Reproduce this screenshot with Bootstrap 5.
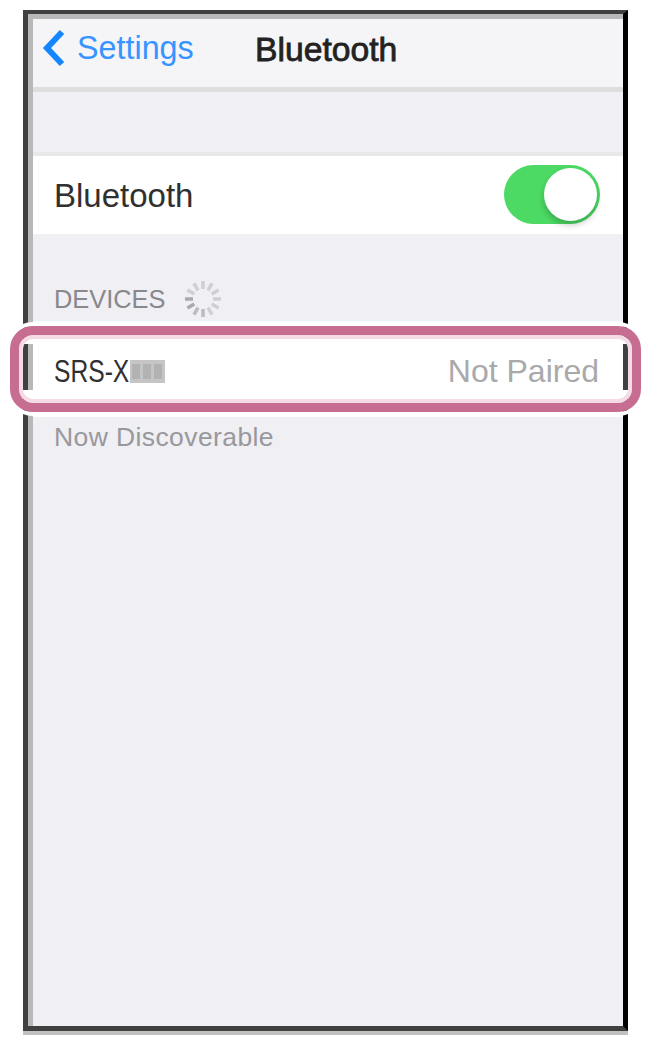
<!DOCTYPE html>
<html lang="en">
<head>
<meta charset="utf-8">
<meta name="viewport" content="width=device-width, initial-scale=1">
<title>Bluetooth</title>
<link href="https://cdn.jsdelivr.net/npm/bootstrap@5.3.0/dist/css/bootstrap.min.css" rel="stylesheet">
<style>
body{background:#fff;font-family:"Liberation Sans",Arial,sans-serif;line-height:1;overflow:hidden}
.phone-shade{width:605px;margin-left:23px;padding-top:10px;border-bottom:4px solid #c1c1c1}
.phone{height:1021px;border:5px solid #404040;border-top-width:4px;border-right-color:#000;background:#efeff4}
.screen{height:1012px;border-left:5px solid #b8b8b8;border-top:5px solid #b8b8b8}
.topbar{height:73px;background:#f5f5f7;border-bottom:5px solid #dededf;padding:0 0 9px 9px}
.back{color:#3894ff;font-size:32.3px;width:213px;gap:11px}
.title{font-size:33.7px;color:#222;-webkit-text-stroke:.8px #222;padding-top:2px}
.switch-row{height:82px;margin-top:60px;border-top:4px solid #e8e8eb;background:#fff;padding:0 23px 2px 21px}
.row-name{font-size:33px;color:#303030;padding-top:3px}
.toggle{width:96px;height:59px;border-radius:30px;background:#4cd964;padding:3px 3px 0 0}
.knob{width:53px;height:53px;border-radius:50%;background:#fff;box-shadow:0 4px 6px #00000038}
.section-head{height:87px;padding:53px 0 0 21px;gap:19px;color:#88888d;font-size:25.4px}
.device{position:relative;height:96px;background:#fff;padding:4px 24px 0 21px}
.device-name{width:76px;font-size:32px;color:#303030;white-space:nowrap}
.device-name span{display:inline-block;transform:scaleX(.77);transform-origin:left}
.status{font-size:32px;color:#a9a9ac}
.ring{position:absolute;left:-23px;top:5px;width:631px;height:86px;border:9px solid #c76d92;border-radius:23px;box-shadow:0 0 0 4px #fff,inset 0 0 0 4px #f4dbe5;background:linear-gradient(#fff 9px,transparent 9px,transparent 55px,#fff 55px) padding-box,linear-gradient(#404040,#404040) 604px 0/5px 100% no-repeat padding-box}
.note{font-size:26.5px;letter-spacing:.4px;color:#98989d;padding:7px 0 0 21px}
.spinner-icon{margin-top:-7px}
</style>
</head>
<body>
<div class="phone-shade">
<main class="phone">
<div class="screen">
  <header class="topbar d-flex align-items-center">
    <a class="back d-flex align-items-center text-decoration-none" href="#">
      <svg width="24" height="40" viewBox="0 0 24 40" fill="none" stroke="#1686ff" stroke-width="6"><path d="M20 3 5 19 20 35"/></svg>
      <span>Settings</span>
    </a>
    <h1 class="title m-0 fw-normal">Bluetooth</h1>
  </header>
  <section class="switch-row d-flex align-items-center justify-content-between">
    <span class="row-name">Bluetooth</span>
    <span class="toggle d-flex justify-content-end" role="switch" aria-checked="true" aria-label="Bluetooth"><span class="knob"></span></span>
  </section>
  <div class="section-head d-flex align-items-start">
    <span>DEVICES</span>
    <svg class="spinner-icon" width="38" height="38" viewBox="-19 -19 38 38" stroke-width="3.5" stroke="#cfcfd3">
      <path d="M0-10V-18M5-8.7 9-15.6M8.7-5 15.6-9M10 0H18M8.7 5 15.6 9M5 8.7 9 15.6M-5-8.7-9-15.6M-8.7-5-15.6-9"/>
      <path d="M0 10V18M-5 8.7-9 15.6" stroke="#bcbcc0"/><path d="M-8.7 5-15.6 9M-10 0H-18" stroke="#a9a9ad"/>
    </svg>
  </div>
  <section class="device d-flex align-items-center">
    <span class="device-name"><span>SRS-X</span></span>
    <svg width="35" height="23" viewBox="0 0 35 23"><path fill="#c5c5c5" d="M0 0H35V23H0Z"/><path fill="#b2b2b2" d="M2 4H10V19H2ZM13 4H21V19H13ZM24 4H32V19H24Z"/></svg>
    <span class="status ms-auto">Not Paired</span>
    <span class="ring"></span>
  </section>
  <p class="note m-0">Now Discoverable</p>
</div>
</main>
</div>
<script src="https://cdn.jsdelivr.net/npm/bootstrap@5.3.0/dist/js/bootstrap.bundle.min.js"></script>
</body>
</html>
